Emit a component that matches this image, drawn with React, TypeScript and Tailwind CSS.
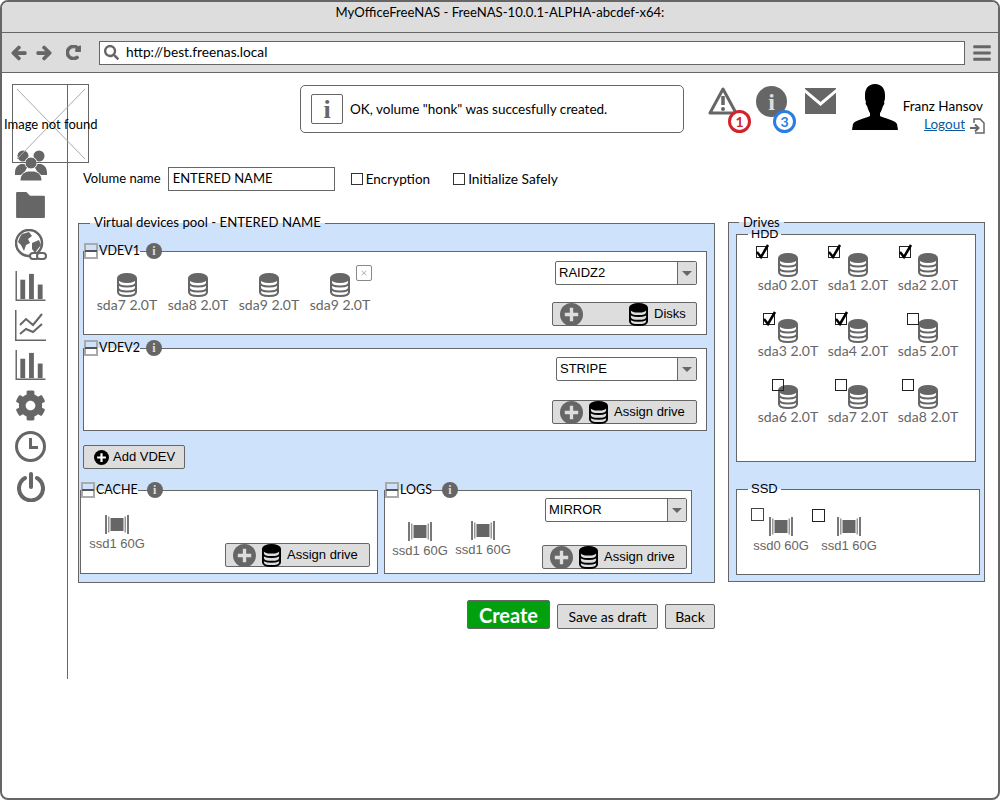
import { FaArrowLeft, FaArrowRight, FaBars, FaCog, FaRedoAlt, FaSearch } from "react-icons/fa";

const GRAY = "#666666";

const HDD_ROWS = [
  { name: "sda0 2.0T", checked: true, box: "left-[-1px] top-[-7px]" },
  { name: "sda1 2.0T", checked: true, box: "left-[1px] top-[-7px]" },
  { name: "sda2 2.0T", checked: true, box: "left-[2px] top-[-7px]" },
  { name: "sda3 2.0T", checked: true, box: "left-[6px] top-[-6px]" },
  { name: "sda4 2.0T", checked: true, box: "left-[8px] top-[-6px]" },
  { name: "sda5 2.0T", checked: false, box: "left-[10px] top-[-6px]" },
  { name: "sda6 2.0T", checked: false, box: "left-[15px] top-[-6px]" },
  { name: "sda7 2.0T", checked: false, box: "left-[8px] top-[-6px]" },
  { name: "sda8 2.0T", checked: false, box: "left-[5px] top-[-6px]" },
];

function Disk({ className = "", color = GRAY }: { className?: string; color?: string }) {
  return (
    <svg viewBox="0 0 20 24" className={className} fill="none" stroke={color} strokeWidth="2">
      <ellipse cx="10" cy="5" rx="9" ry="4" fill={color} />
      <path d="M1 5v14c0 2.500 4 4 9 4s9-1.500 9-4V5" />
      <path d="M1 9.500c0 2.500 4 4 9 4s9-1.500 9-4M1 14.500c0 2.500 4 4 9 4s9-1.500 9-4" />
    </svg>
  );
}

function Ssd({ className = "" }: { className?: string }) {
  return (
    <svg viewBox="0 0 24 19" className={className}>
      <rect x="0" y="0" width="2" height="19" fill="#777" />
      <rect x="3" y="1.500" width="1.500" height="16" fill="#999" />
      <rect x="5.500" y="3" width="13" height="13" fill={GRAY} />
      <rect x="19.500" y="1.500" width="1.500" height="16" fill="#999" />
      <rect x="22" y="0" width="2" height="19" fill="#777" />
    </svg>
  );
}

function DriveItem({ name, disk = true }: { name: string; disk?: boolean }) {
  return (
    <div className="flex w-[62px] flex-col items-center">
      {disk ? <Disk className="h-[24px] w-[20px]" /> : <Ssd className="my-[2px] h-[19px] w-[24px]" />}
      <span
        className={`whitespace-nowrap leading-[16px] text-[#666] ${
          disk ? "text-[14px]" : "font-['Liberation_Sans',sans-serif] text-[13px]"
        }`}
      >
        {name}
      </span>
    </div>
  );
}

function GroupLegend({ label, dot = "ml-[6px]" }: { label: string; dot?: string }) {
  return (
    <legend className="relative flex h-[16px] items-center">
      <span className="flex h-[16px] w-[14px] items-center justify-center border-2 border-[#aaa] bg-transparent">
        <span className="h-[2px] w-[12px] shrink-0 bg-[#555]" />
      </span>
      <span className="pl-[1px] text-[12.5px] leading-none text-black">{label}</span>
      <span
        className={`absolute left-full top-0 flex h-[16px] w-[16px] items-center justify-center rounded-full bg-[#666] font-['Liberation_Serif',serif] text-[12px] font-bold leading-none text-[#ddd] ${dot}`}
      >
        i
      </span>
    </legend>
  );
}

function PlusCircle({ className = "", dark = false }: { className?: string; dark?: boolean }) {
  return (
    <svg viewBox="0 0 24 24" className={className}>
      <circle cx="12" cy="12" r="12" fill={dark ? "#000" : GRAY} />
      <path d="M12 5v14M5 12h14" stroke={dark ? "#fff" : "#ddd"} strokeWidth="3.500" />
    </svg>
  );
}

function AssignButton({ label, className = "" }: { label: string; className?: string }) {
  return (
    <div className={`flex h-[24px] w-[145px] items-center rounded-[2px] border border-[#666] bg-[#ddd] pl-[7px] ${className}`}>
      <PlusCircle className="h-[23px] w-[23px] shrink-0" />
      <Disk color="#000" className="ml-[6px] h-[23px] w-[19px] shrink-0" />
      <span className="ml-[6px] whitespace-nowrap font-['Liberation_Sans',sans-serif] text-[13px] text-black">{label}</span>
    </div>
  );
}

function Select({ value, className = "" }: { value: string; className?: string }) {
  return (
    <div className={`flex h-[24px] items-stretch rounded-[2px] border border-[#666] bg-white ${className}`}>
      <span className="flex-1 pl-[3px] font-['Liberation_Sans',sans-serif] text-[13px] leading-[22px] text-black">{value}</span>
      <span className="flex w-[19px] items-center justify-center border-l border-[#666] bg-[#ddd]">
        <span className="h-0 w-0 border-x-[5px] border-t-[5px] border-x-transparent border-t-[#666]" />
      </span>
    </div>
  );
}

function BarChart({ className = "" }: { className?: string }) {
  return (
    <svg viewBox="0 0 31 31" className={`h-[30px] w-[31px] ${className}`} fill={GRAY}>
      <path d="M0 0h1.500v29.500H31V31H0z" />
      <rect x="5" y="9" width="5" height="20" />
      <rect x="14" y="3" width="5" height="26" />
      <rect x="23" y="14" width="5" height="15" />
    </svg>
  );
}

function SideIcons() {
  return (
    <div className="mt-[11px] flex h-[595px] w-[66px] shrink-0 flex-col items-center border-r border-[#666] pr-[8px] pt-[65px]">
      {/* users */}
      <svg viewBox="0 0 32 32" className="h-[32px] w-[32px]" fill={GRAY}>
        <circle cx="8" cy="7" r="5.500" />
        <circle cx="24" cy="7" r="5.500" />
        <path d="M0 24c0-6 3-8 6-9h5l2 2-4 7v2H0zM32 24c0-6-3-8-6-9h-5l-2 2 4 7v2h9z" />
        <circle cx="16" cy="14" r="6" stroke="#fff" strokeWidth="1" />
        <path d="M5 32c0-7 4-9 8-10h6c4 1 8 3 8 10z" stroke="#fff" strokeWidth="1" />
      </svg>
      {/* folder */}
      <svg viewBox="0 0 31 28" className="mt-[11px] h-[26px] w-[31px]" fill={GRAY}>
        <path d="M1 0h10l4 4h15a1 1 0 0 1 1 1v22a1 1 0 0 1-1 1H1a1 1 0 0 1-1-1V1a1 1 0 0 1 1-1z" />
      </svg>
      {/* globe with link */}
      <svg viewBox="0 0 32 32" className="mt-[11px] h-[32px] w-[32px]">
        <circle cx="14" cy="14" r="13" fill="none" stroke={GRAY} strokeWidth="2.500" />
        <path d="M7 5l7-2 3 4-4 3 2 4-4 2-2 6-3-6-3-3 2-5zM17 14l7-3 2 5-4 5-2 3-3-4z" fill={GRAY} />
        <rect x="15" y="24" width="9" height="6" rx="3" fill="#fff" stroke={GRAY} strokeWidth="2" />
        <rect x="22" y="24" width="9" height="6" rx="3" fill="#fff" stroke={GRAY} strokeWidth="2" />
      </svg>
      <BarChart className="mt-[10px]" />
      {/* line chart */}
      <svg viewBox="0 0 31 31" className="mt-[9px] h-[31px] w-[31px]" fill="none" stroke={GRAY}>
        <path d="M.75 0v30.250H31" strokeWidth="1.500" />
        <path d="M5 15l6-6 7 6 9-11M5 24l6-5 7 3 9-8" strokeWidth="2" />
      </svg>
      <BarChart className="mt-[9px]" />
      <FaCog className="mt-[10px] h-[31px] w-[31px] text-[#666]" />
      {/* clock */}
      <svg viewBox="0 0 31 31" className="mt-[10px] h-[31px] w-[31px]" fill="none" stroke={GRAY} strokeWidth="3">
        <circle cx="15.500" cy="15.500" r="14" />
        <path d="M15.500 7v9.500H23" />
      </svg>
      {/* power */}
      <svg viewBox="0 0 28 30" className="mt-[10px] h-[30px] w-[28px]" fill="none" stroke={GRAY} strokeWidth="4" strokeLinecap="round">
        <path d="M8 6a12 12 0 1 0 12 0" />
        <path d="M14 2v13" />
      </svg>
    </div>
  );
}

function Header() {
  return (
    <div className="flex h-[48px] items-start pl-[232px]">
      <div className="flex h-[48px] w-[384px] items-center rounded-[5px] border border-[#666] pl-[10px]">
        <span className="flex h-[30px] w-[32px] items-center justify-center rounded-[2px] border border-[#666] font-['Liberation_Serif',serif] text-[26px] font-bold text-[#666]">
          i
        </span>
        <span className="ml-[7px] pt-[1px] text-[13.5px] text-black">OK, volume "honk" was succesfully created.</span>
      </div>

      <div className="relative ml-[24px] mt-[1px] h-[31px] w-[30px]">
        <svg viewBox="0 0 30 31" className="h-[31px] w-[30px]" fill="none">
          <path d="M15 3L2 27h26z" stroke={GRAY} strokeWidth="3" strokeLinejoin="round" />
          <path d="M15 10v9" stroke={GRAY} strokeWidth="3.500" />
          <circle cx="15" cy="23" r="2" fill={GRAY} />
        </svg>
        <span className="absolute left-[20px] top-[24px] flex h-[23px] w-[23px] items-center justify-center rounded-full border-[3px] border-[#d2232a] bg-white text-[14px] font-bold leading-none text-[#d2232a]">
          1
        </span>
      </div>

      <div className="relative ml-[18px] mt-[1px] flex h-[31px] w-[31px] items-center justify-center rounded-full bg-[#666] font-['Liberation_Serif',serif] text-[24px] font-bold leading-none text-[#ddd]">
        i
        <span className="absolute left-[17px] top-[24px] flex h-[23px] w-[23px] items-center justify-center rounded-full border-[3px] border-[#2a7de1] bg-white font-['Lato',sans-serif] text-[14px] font-bold leading-none text-[#2a7de1]">
          3
        </span>
      </div>

      <svg viewBox="0 0 31 26" className="ml-[18px] mt-[3px] h-[26px] w-[31px]">
        <rect width="31" height="26" fill={GRAY} />
        <path d="M-1 2l16.500 14L32 2" fill="none" stroke="#fff" strokeWidth="3" />
      </svg>

      <svg viewBox="0 0 46 46" className="ml-[16px] mt-[-1px] h-[46px] w-[46px]" fill="#000">
        <path d="M23 0c7 0 10 5 10 11 0 3 0 5-1 7 1 1 0 3-1 4-1 3-2 6-3 7v3c3 2 15 4 17 8l1 6H0l1-6c2-4 14-6 17-8v-3c-1-1-2-4-3-7-1-1-2-3-1-4-1-2-1-4-1-7C13 5 16 0 23 0z" />
      </svg>

      <div className="ml-[3px] mt-[12px] flex w-[84px] flex-col items-end text-[13.5px] leading-[18px]">
        <span className="mr-[2px] whitespace-nowrap text-black">Franz Hansov</span>
        <div className="flex items-start">
          <span className="text-[#0b5aa0] underline">Logout</span>
          <svg viewBox="0 0 15 16" className="ml-[5px] mt-[3px] h-[16px] w-[15px]" fill="none" stroke={GRAY} strokeWidth="1.500">
            <path d="M4 5V1h6l4 4v10H5" />
            <path d="M0 10h8M5 6.500L8.500 10 5 13.500" strokeWidth="2" />
          </svg>
        </div>
      </div>
    </div>
  );
}

function VolumeRow() {
  return (
    <div className="mt-[34px] flex h-[24px] items-center pl-[15px] text-[13px] text-black">
      <span>Volume name</span>
      <div className="ml-[7px] flex h-[24px] w-[167px] items-center border border-[#666] pl-[4px]">ENTERED NAME</div>
      <span className="ml-[16px] h-[12px] w-[12px] border border-[#333]" />
      <span className="ml-[3px] text-[13.5px]">Encryption</span>
      <span className="ml-[23px] h-[12px] w-[12px] border border-[#333]" />
      <span className="ml-[3px] text-[13.75px]">Initialize Safely</span>
    </div>
  );
}

function Pool() {
  return (
    <fieldset className="h-[369px] w-[637px] border border-[#666] bg-[#cfe2fb] pl-[4px]">
      <legend className="ml-[7px] h-[18px] px-[4px] text-[13.2px] leading-[16px] text-black">
        Virtual devices pool - ENTERED NAME
      </legend>

      <fieldset className="mt-[11px] h-[92px] w-[624px] border border-[#666] bg-white">
        <GroupLegend label="VDEV1" />
        <div className="relative flex h-[76px] justify-between pl-[12px] pr-[9px]">
          <div className="mt-[14px] flex h-[41px] gap-[9px]">
            <DriveItem name="sda7 2.0T" />
            <DriveItem name="sda8 2.0T" />
            <DriveItem name="sda9 2.0T" />
            <DriveItem name="sda9 2.0T" />
          </div>
          <span className="absolute left-[272px] top-[6px] flex h-[16px] w-[16px] items-center justify-center rounded-[2px] border border-[#888] text-[12px] font-light leading-none text-[#777]">
            ×
          </span>
          <div className="mt-[2px] flex flex-col items-end">
            <Select value="RAIDZ2" className="w-[142px]" />
            <div className="mt-[17px] flex h-[24px] w-[145px] items-center rounded-[2px] border border-[#666] bg-[#ddd] pl-[7px]">
              <PlusCircle className="h-[23px] w-[23px] shrink-0" />
              <Disk color="#000" className="ml-[46px] h-[23px] w-[19px] shrink-0" />
              <span className="ml-[6px] font-['Liberation_Sans',sans-serif] text-[13px] text-black">Disks</span>
            </div>
          </div>
        </div>
      </fieldset>

      <fieldset className="mt-[5px] h-[91px] w-[624px] border border-[#666] bg-white">
        <GroupLegend label="VDEV2" />
        <div className="flex flex-col items-end pr-[9px] pt-[1px]">
          <Select value="STRIPE" className="w-[141px]" />
          <AssignButton label="Assign drive" className="mt-[19px]" />
        </div>
      </fieldset>

      <div className="mt-[14px] flex h-[24px] w-[102px] items-center rounded-[2px] border border-[#666] bg-[#ddd] pl-[10px] font-['Liberation_Sans',sans-serif] text-[13px] text-black">
        <PlusCircle dark className="mr-[4px] h-[15px] w-[15px]" />
        Add VDEV
      </div>

      <div className="-ml-[3px] mt-[13px] flex gap-[6px]">
        <fieldset className="h-[92px] w-[298px] border border-[#666] bg-white">
          <GroupLegend label="CACHE" dot="ml-[9px]" />
          <div className="flex justify-between pl-[5px] pr-[7px]">
            <div className="mt-[15px]">
              <DriveItem name="ssd1 60G" disk={false} />
            </div>
            <AssignButton label="Assign drive" className="mt-[45px]" />
          </div>
        </fieldset>
        <fieldset className="h-[92px] w-[308px] border border-[#666] bg-white">
          <GroupLegend label="LOGS" dot="ml-[10px]" />
          <div className="flex justify-between pl-[4px] pr-[4px]">
            <div className="mt-[22px] flex h-[41px]">
              <DriveItem name="ssd1 60G" disk={false} />
              <div className="-mt-[1px] ml-[1px]">
                <DriveItem name="ssd1 60G" disk={false} />
              </div>
            </div>
            <div className="flex flex-col items-end">
              <Select value="MIRROR" className="w-[142px]" />
              <AssignButton label="Assign drive" className="mt-[23px]" />
            </div>
          </div>
        </fieldset>
      </div>
    </fieldset>
  );
}

function Drives() {
  return (
    <fieldset className="h-[368px] w-[257px] min-w-0 border border-[#666] bg-[#cfe2fb] pl-[7px]">
      <legend className="ml-[3px] h-[16px] px-[4px] text-[13px] leading-[16px] text-black">Drives</legend>
      <fieldset className="-mt-[4px] h-[236px] w-[240px] border border-[#666] bg-white">
        <legend className="ml-[11px] h-[16px] px-[3px] text-[12px] leading-[16px] text-black">HDD</legend>
        <div className="grid grid-cols-[70px_70px_70px] gap-y-[26px] pl-[20px] pt-[11px]">
          {HDD_ROWS.map((d) => (
            <div key={d.name} className="relative">
              <DriveItem name={d.name} />
              <span className={`absolute flex h-[12px] w-[12px] items-center justify-center border border-[#222] ${d.box}`}>
                {d.checked && (
                  <svg viewBox="0 0 14 14" className="h-[14px] w-[14px] shrink-0 overflow-visible" fill="none" stroke="#000" strokeWidth="2.500">
                    <path d="M2 7l4 5 7-12" />
                  </svg>
                )}
              </span>
            </div>
          ))}
        </div>
      </fieldset>
      <fieldset className="mt-[19px] h-[94px] w-[244px] border border-[#666] bg-white">
        <legend className="ml-[11px] h-[16px] px-[3px] font-['Liberation_Sans',sans-serif] text-[13px] leading-[16px] text-black">SSD</legend>
        <div className="flex pl-[10px] pt-[18px]">
          <div className="relative mr-[1px] pl-[3px]">
            <DriveItem name="ssd0 60G" disk={false} />
            <span className="absolute left-[4px] top-[-7px] h-[13px] w-[13px] border border-[#444]" />
          </div>
          <div className="relative pl-[5px]">
            <DriveItem name="ssd1 60G" disk={false} />
            <span className="absolute left-[-1px] top-[-6px] h-[13px] w-[13px] border border-[#222]" />
          </div>
        </div>
      </fieldset>
    </fieldset>
  );
}

export default function App() {
  return (
    <div className="relative h-[800px] w-[1000px] overflow-hidden rounded-[8px] border-2 border-[#666] bg-white font-['Lato',sans-serif]">
      <div className="flex h-[30px] items-center justify-center bg-[#ddd] pb-[8px] text-[13.1px] text-black">
        MyOfficeFreeNAS - FreeNAS-10.0.1-ALPHA-abcdef-x64:
      </div>
      <div className="flex h-[41px] items-center border-y border-[#666] bg-[#ddd] pl-[9px]">
        <FaArrowLeft className="h-[16px] w-[16px] text-[#666] [stroke-width:40px]" />
        <FaArrowRight className="ml-[9px] h-[16px] w-[16px] text-[#666] [stroke-width:40px]" />
        <FaRedoAlt className="ml-[14px] h-[15px] w-[15px] text-[#666] [stroke-width:40px]" />
        <div className="ml-[18px] flex h-[24px] w-[866px] items-center border border-[#666] bg-white pl-[4px] text-[13.7px] text-black">
          <FaSearch className="h-[15px] w-[15px] text-[#666]" />
          <span className="ml-[7px]">http://best.freenas.local</span>
        </div>
        <FaBars className="ml-[8px] h-[20px] w-[18px] text-[#666]" />
      </div>

      <div className="flex">
        <SideIcons />
        <div className="w-[930px] pt-[12px]">
          <Header />
          <VolumeRow />
          <div className="mt-[23px] flex items-start gap-[13px] pl-[10px]">
            <Pool />
            <Drives />
          </div>
          <div className="mt-[17px] flex w-[647px] items-end justify-end gap-[7px] text-[14px] text-black">
            <div className="flex h-[29px] w-[83px] items-center justify-center rounded-[2px] border border-[#666] bg-[#00a00f] text-[20px] font-bold text-white">
              Create
            </div>
            <div className="flex h-[25px] w-[101px] items-center justify-center rounded-[2px] border border-[#666] bg-[#ddd]">Save as draft</div>
            <div className="flex h-[25px] w-[50px] items-center justify-center rounded-[2px] border border-[#666] bg-[#ddd]">Back</div>
          </div>
        </div>
      </div>

      {/* broken logo placeholder, lies over the sidebar */}
      <div className="absolute left-[10px] top-[82px] h-[79px] w-[77px] border border-[#666]">
        <svg viewBox="0 0 75 77" className="absolute inset-0 h-full w-full" stroke="#aaa" strokeWidth="1">
          <path d="M4 4l68 70M72 4L4 74" />
        </svg>
      </div>
      <span className="absolute left-[2px] top-[116px] whitespace-nowrap text-[13px] leading-none text-black">Image not found</span>
    </div>
  );
}
